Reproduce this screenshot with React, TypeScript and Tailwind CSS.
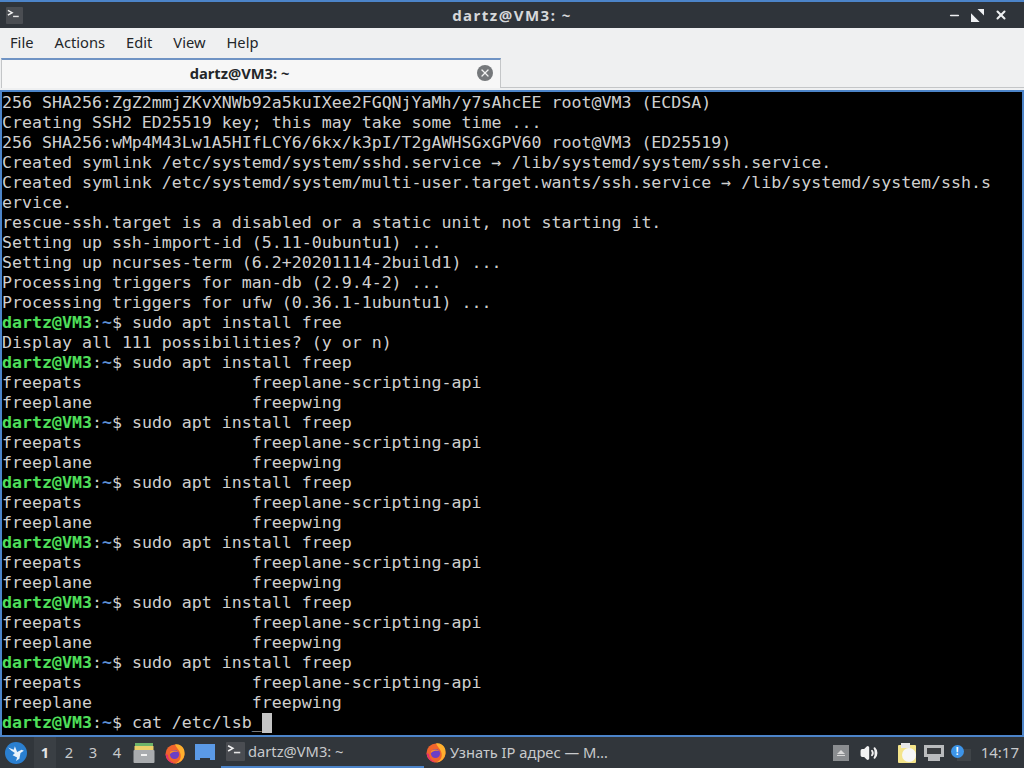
import { Minus, X, Volume2 } from "lucide-react";

type Line = string | { prompt: string };

const comp: Line[] = [
  "freepats                 freeplane-scripting-api",
  "freeplane                freepwing",
];

const lines: Line[] = [
  "256 SHA256:ZgZ2mmjZKvXNWb92a5kuIXee2FGQNjYaMh/y7sAhcEE root@VM3 (ECDSA)",
  "Creating SSH2 ED25519 key; this may take some time ...",
  "256 SHA256:wMp4M43Lw1A5HIfLCY6/6kx/k3pI/T2gAWHSGxGPV60 root@VM3 (ED25519)",
  "Created symlink /etc/systemd/system/sshd.service → /lib/systemd/system/ssh.service.",
  "Created symlink /etc/systemd/system/multi-user.target.wants/ssh.service → /lib/systemd/system/ssh.s",
  "ervice.",
  "rescue-ssh.target is a disabled or a static unit, not starting it.",
  "Setting up ssh-import-id (5.11-0ubuntu1) ...",
  "Setting up ncurses-term (6.2+20201114-2build1) ...",
  "Processing triggers for man-db (2.9.4-2) ...",
  "Processing triggers for ufw (0.36.1-1ubuntu1) ...",
  { prompt: "sudo apt install free" },
  "Display all 111 possibilities? (y or n)",
  { prompt: "sudo apt install freep" },
  ...comp,
  { prompt: "sudo apt install freep" },
  ...comp,
  { prompt: "sudo apt install freep" },
  ...comp,
  { prompt: "sudo apt install freep" },
  ...comp,
  { prompt: "sudo apt install freep" },
  ...comp,
  { prompt: "sudo apt install freep" },
  ...comp,
];

function Prompt() {
  return (
    <>
      <span className="font-bold text-[#4fe05a]">dartz@VM3</span>
      <span className="text-[#d0d0d0]">:</span>
      <span className="font-bold text-[#5c8fd6]">~</span>
      <span className="text-[#d0d0d0]">$ </span>
    </>
  );
}

function TermIcon({ className }: { className: string }) {
  return (
    <svg viewBox="0 0 18 18" className={className}>
      <rect width="18" height="18" rx="1" fill="#4a4d52" />
      <path d="M2 3.5 L6.5 6 L2 8.5" fill="none" stroke="#f2f2f2" strokeWidth="1.5" />
      <path d="M7.5 10h6" stroke="#e6e6e6" strokeWidth="1.5" />
    </svg>
  );
}

function Firefox() {
  return (
    <svg viewBox="0 0 22 22" className="w-[22px] h-[22px]">
      <circle cx="11" cy="12" r="9.5" fill="#f0642c" />
      <path d="M11 2.5 C17 1 21.5 7 20.5 12.5 C20 17 16 21.5 11 21.5 C16 20 18 15 16 10.5 C15 7.5 12.5 6 11 2.5Z" fill="#ffb02e" />
      <path d="M1.6 12 C1.6 17 6 21.5 11 21.5 C7 20 4 17 4 13Z" fill="#e5326b" />
      <circle cx="10.5" cy="12.5" r="4.6" fill="#6b3fc4" />
      <path d="M6 10 C8 8 12 8 14.5 10 C12 9.5 8 9.5 6 12Z" fill="#f58a2c" />
    </svg>
  );
}

export default function App() {
  return (
    <div className="w-[1024px] h-[768px] flex flex-col overflow-hidden bg-[#31363b] font-['Noto_Sans',sans-serif]">
      <div className="h-[2px] bg-[#4c84c9]" />

      {/* title bar */}
      <div className="h-[26px] flex items-center bg-[#2f343a] pl-[6px] pr-[16px]">
        <div className="w-[84px]">
          <TermIcon className="w-[17px] h-[17px]" />
        </div>
        <div className="flex-1 text-center text-[15px] leading-[20px] font-bold tracking-[1.5px] text-[#d6d8da]">dartz@VM3: ~</div>
        <div className="w-[74px] flex items-center justify-end gap-[10px] text-[#eef0f2]">
          <Minus className="w-[13px] h-[13px]" strokeWidth={3} />
          <svg viewBox="0 0 12 12" className="w-[13px] h-[13px]" fill="currentColor">
            <path d="M12 0v6L6 0Z" />
            <path d="M0 12V4l8 8Z" />
          </svg>
          <X className="w-[14px] h-[14px]" strokeWidth={3.5} />
        </div>
      </div>

      {/* menu bar */}
      <div className="h-[30px] flex items-center gap-[21px] bg-[#eff0f1] pl-[10px] pb-[2px] text-[14.7px] text-[#232629]">
        <span>File</span>
        <span>Actions</span>
        <span>Edit</span>
        <span>View</span>
        <span>Help</span>
      </div>

      {/* tab row */}
      <div className="h-[32px] flex bg-[#eff0f1]">
        <div className="ml-[1px] w-[500px] h-[30px] flex items-center pb-[2px] border-t-2 border-x border-t-[#6f93c4] border-x-[#c4c6c8] bg-[#f7f7f7]">
          <span className="flex-1 text-center text-[14.7px] font-bold text-[#232629]">dartz@VM3: ~</span>
          <span className="mr-[7px] w-[16px] h-[16px] rounded-full bg-[#75787b] flex items-center justify-center">
            <X className="w-[12px] h-[12px] text-[#f2f2f2]" strokeWidth={2.5} />
          </span>
        </div>
        <div className="flex-1 h-[30px] border-b border-[#c4c6c8]" />
      </div>

      {/* terminal */}
      <div className="h-[647px] border-2 border-[#4c84c9] pt-[1px] bg-black font-['DejaVu_Sans_Mono',monospace] text-[16.6px] leading-[20px] text-[#d0d0d0] whitespace-pre overflow-hidden">
        {lines.map((line, i) =>
          typeof line === "string" ? (
            <div key={i} className="h-[20px]">{line}</div>
          ) : (
            <div key={i} className="h-[20px]">
              <Prompt />
              {line.prompt}
            </div>
          )
        )}
        <div className="h-[20px] flex">
          <span>
            <Prompt />
            cat /etc/lsb_
          </span>
          <span className="w-[10px] h-[20px] bg-[#c4c4c4]" />
        </div>
      </div>

      {/* taskbar */}
      <div className="flex-1 flex items-center bg-[#31363b] text-[#c8cacc] text-[14.7px]">
        <div className="ml-[5px] w-[22px] h-[22px] rounded-full bg-[#2a7fd0] flex items-center justify-center">
          <svg viewBox="0 0 16 16" className="w-[18px] h-[18px]" fill="#e8f2fb">
            <path d="M1 3l5 2 1-3 2 5 4-2 2 1-3 2-1 5-3 2 1-3-4-2 2-2-3-2-3-3Z" />
          </svg>
        </div>
        <div className="ml-[7px] flex items-center">
          <span className="w-[22px] h-[31px] flex items-center justify-center bg-[#3a3f44] font-bold text-[#e4e5e6]">1</span>
          <span className="w-[26px] text-center">2</span>
          <span className="w-[22px] text-center">3</span>
          <span className="w-[26px] text-center">4</span>
        </div>
        <svg viewBox="0 0 22 22" className="ml-[3px] w-[22px] h-[22px]">
          <rect x="2" y="1" width="18" height="4" fill="#6db46a" />
          <rect x="1.5" y="4" width="19" height="4" fill="#ecd06a" />
          <rect x="0.5" y="8" width="21" height="13" rx="1" fill="#a9acaf" />
          <rect x="8" y="12" width="6" height="2" fill="#f2f2f2" />
        </svg>
        <div className="ml-[9px]">
          <Firefox />
        </div>
        <svg viewBox="0 0 20 18" className="ml-[9px] w-[20px] h-[18px]">
          <path d="M0 0h20v16h-5v-2H5v2H0Z" fill="#5b9ae6" />
        </svg>
        <div className="ml-[6px] w-[203px] h-[31px] flex items-center border-b-2 border-[#4c84c9] pl-[5px]">
          <TermIcon className="w-[19px] h-[19px]" />
          <span className="ml-[3px] whitespace-nowrap">dartz@VM3: ~</span>
        </div>
        <div className="ml-[1px] w-[200px] flex items-center">
          <Firefox />
          <span className="ml-[3px] whitespace-nowrap">Узнать IP адрес — М…</span>
        </div>
        <div className="ml-auto flex items-center pr-[5px]">
          <div className="w-[16px] h-[16px] bg-[#8a8d90] flex flex-col items-center justify-center gap-[1px]">
            <div className="w-0 h-0 border-x-[4px] border-x-transparent border-b-[4px] border-b-[#d8d8d8]" />
            <div className="w-[8px] h-[1px] bg-[#d8d8d8]" />
          </div>
          <Volume2 className="ml-[11px] w-[18px] h-[18px] text-[#f2f2f2]" fill="#f2f2f2" strokeWidth={2.5} />
          <svg viewBox="0 0 20 22" className="ml-[19px] w-[20px] h-[22px]">
            <rect x="1" y="3" width="18" height="18" rx="1" fill="#f4e48a" />
            <rect x="4" y="1" width="9" height="5" fill="#e8e8e8" />
            <circle cx="12" cy="13" r="7" fill="#f6f6f6" />
          </svg>
          <svg viewBox="0 0 20 16" className="ml-[7px] w-[20px] h-[16px]">
            <path d="M0 0h20v12h-4v4H4v-4H0Z" fill="#b9bbbd" />
            <rect x="3" y="3" width="14" height="6" fill="#3a3d40" />
          </svg>
          <div className="relative ml-[7px] w-[20px] h-[16px]">
            <div className="absolute right-0 bottom-0 w-[14px] h-[12px] bg-[#3f4448]" />
            <div className="absolute left-0 top-0 w-[13px] h-[13px] rounded-full bg-[#3d94e8] flex items-center justify-center text-[10px] leading-none font-bold text-white">!</div>
          </div>
          <span className="ml-[10px] text-[15px]">14:17</span>
        </div>
      </div>
    </div>
  );
}
